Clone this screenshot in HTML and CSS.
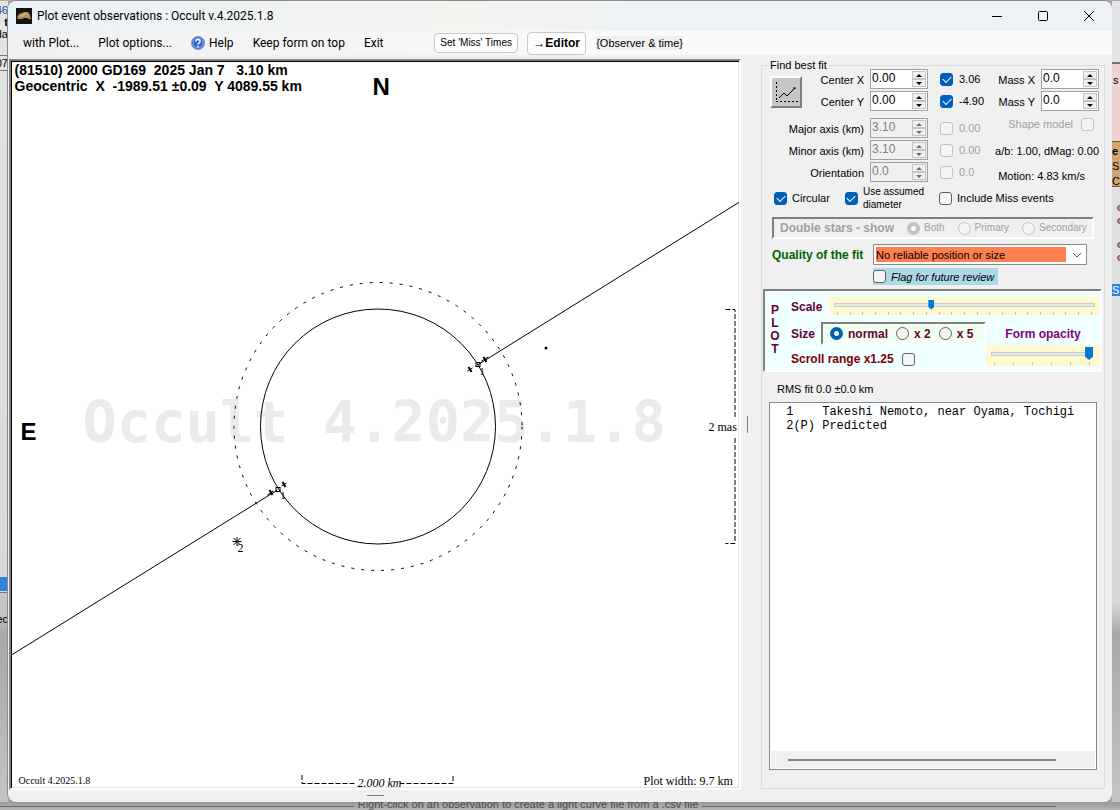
FILE: index.html
```html
<!DOCTYPE html>
<html lang="en">
  <head>
    <meta charset="utf-8" />
    <meta name="viewport" content="width=device-width" />
    <title>Plot event observations : Occult v.4.2025.1.8</title>
    <link rel="stylesheet" href="styles.css">
  </head>
  <body>
    <!-- visible edges of the form behind this window -->
    <div class="behind behind-left">
      <span class="frag frag-num">46</span>
      <span class="frag frag-bold">t</span>
      <span class="frag">da</span>
      <span class="frag frag-box">07</span>
      <span class="frag-fill"></span>
      <span class="frag-select"></span>
      <span class="frag-bar"></span>
      <span class="frag frag-low">ec</span>
    </div>

    <div class="window">
      <header class="titlebar">
        <svg class="app-icon" viewBox="0 0 16 16" aria-hidden="true">
          <rect width="16" height="16" fill="#17130f" />
          <path d="M1 9l2-3 3-1 2-1 4 0 2 3 1 4-2 0-2-1-3 0-2 1-4 0z" fill="#b08c64" />
          <path d="M3 8l3-2 4-1 3 2-4 0-3 2z" fill="#cdaa80" />
        </svg>
        <h1>Plot event observations : Occult v.4.2025.1.8</h1>
        <div class="caption-buttons">
          <button type="button" aria-label="Minimize">
            <svg viewBox="0 0 12 12"><path d="M1 6.5h10" /></svg>
          </button>
          <button type="button" aria-label="Maximize">
            <svg viewBox="0 0 12 12"><rect x="1.5" y="1.5" width="9" height="9" rx="1" /></svg>
          </button>
          <button type="button" aria-label="Close">
            <svg viewBox="0 0 12 12"><path d="M1 1l10 10M11 1L1 11" /></svg>
          </button>
        </div>
      </header>

      <nav class="menubar">
        <button type="button" class="menu">with Plot...</button>
        <button type="button" class="menu">Plot options...</button>
        <button type="button" class="menu menu-help">
          <svg viewBox="0 0 14 14" aria-hidden="true">
            <circle cx="7" cy="7" r="6.5" fill="#2a62cf" stroke="#7d9bd0" />
            <circle cx="7" cy="7" r="5" fill="none" stroke="#b9cdf5" stroke-width=".7" />
            <path d="M5 5.4c0-2.6 4.1-2.5 4.1 0 0 1.5-2 1.5-2 3" fill="none" stroke="#fff" stroke-width="1.5" />
            <circle cx="7" cy="10.5" r=".9" fill="#fff" />
          </svg>
          Help
        </button>
        <button type="button" class="menu">Keep form on top</button>
        <button type="button" class="menu">Exit</button>
        <button type="button" class="push push-miss">Set 'Miss' Times</button>
        <button type="button" class="push push-editor">→Editor</button>
        <span class="hint">{Observer &amp; time}</span>
      </nav>

      <main class="work">
        <section class="plot-column">
          <div class="plot">
            <svg viewBox="-1 0 727 727" role="img" aria-label="Event plot">
              <text class="watermark" x="70" y="381">Occult 4.2025.1.8</text>
              <text class="heading" x="2" y="14">(81510) 2000 GD169&#160; 2025 Jan 7&#160;&#160; 3.10 km</text>
              <text class="heading" x="2" y="30">Geocentric&#160; X&#160; -1989.51 ±0.09&#160; Y 4089.55 km</text>
              <text class="compass" x="360" y="34">N</text>
              <text class="compass" x="8" y="379">E</text>

              <g class="ink">
                <circle cx="365.5" cy="365.5" r="117.5" />
                <circle cx="365.5" cy="365.5" r="144" stroke-dasharray="3 7" />
                <path d="M727 141L465 304M265 429L-1 594" />
                <rect x="463.500" y="301.500" width="4" height="4" />
                <rect x="263.500" y="426.500" width="4" height="4" />
                <path d="M220 480.500h9M224.500 476v9M221 477l7 7M228 477l-7 7" />
              </g>
              <g class="ink-thick">
                <path d="M471 296l3 5M456 306l3 5M257 429l3 5M270 421l3 5" />
              </g>
              <path class="ink" d="M469 300l7-4M455 310l5-3M255 434l6-4M269 425l5-3" />
              <circle cx="533.500" cy="287" r="1.500" />
              <text class="small" x="467" y="314">1</text>
              <text class="small" x="268" y="438">1</text>
              <text class="label" x="225" y="491">2</text>

              <!-- angular scale -->
              <path class="ink scale-line" d="M713 248.500H722.500V357M722.500 377V482.500H713" />
              <text class="label" x="696" y="370">2 mas</text>

              <!-- distance scale -->
              <path class="ink scale-line" d="M289.500 714V722.500H344M387 722.500H440.500V713" />
              <text class="label italic" x="345" y="726">2.000 km</text>

              <text class="small" x="6" y="723">Occult 4.2025.1.8</text>
              <text class="label" x="631" y="724">Plot width: 9.7 km</text>
            </svg>
          </div>
          <div class="grip grip-bottom"></div>
        </section>

        <div class="splitter"><div class="grip grip-side"></div></div>

        <fieldset class="panel">
          <legend>Find best fit</legend>

          <div class="fit">
            <div class="fit-grid">
              <button type="button" class="fit-button" aria-label="Fit">
                <svg viewBox="0 0 28 28">
                  <path d="M4.500 4v20M4 23.500h22" stroke-dasharray="2 2" />
                  <path d="M7 20l5-5 3 3 8-8M21 10h3" />
                </svg>
              </button>
              <label class="name" for="cx">Center X</label>
              <span class="spin"><input id="cx" type="text" value="0.00"><span class="arrows"><button type="button" aria-label="Up"></button><button type="button" aria-label="Down"></button></span></span>
              <label class="tick"><input type="checkbox" checked>3.06</label>

              <label class="name" for="cy">Center Y</label>
              <span class="spin"><input id="cy" type="text" value="0.00"><span class="arrows"><button type="button" aria-label="Up"></button><button type="button" aria-label="Down"></button></span></span>
              <label class="tick"><input type="checkbox" checked>-4.90</label>

              <label class="name wide" for="major">Major axis (km)</label>
              <span class="spin"><input id="major" type="text" value="3.10" disabled><span class="arrows"><button type="button" aria-label="Up" disabled></button><button type="button" aria-label="Down" disabled></button></span></span>
              <label class="tick off"><input type="checkbox" disabled>0.00</label>

              <label class="name wide" for="minor">Minor axis (km)</label>
              <span class="spin"><input id="minor" type="text" value="3.10" disabled><span class="arrows"><button type="button" aria-label="Up" disabled></button><button type="button" aria-label="Down" disabled></button></span></span>
              <label class="tick off"><input type="checkbox" disabled>0.00</label>

              <label class="name wide" for="orient">Orientation</label>
              <span class="spin"><input id="orient" type="text" value="0.0" disabled><span class="arrows"><button type="button" aria-label="Up" disabled></button><button type="button" aria-label="Down" disabled></button></span></span>
              <label class="tick off"><input type="checkbox" disabled>0.0</label>
            </div>

            <div class="mass">
              <div class="mass-row">
                <label for="mx">Mass X</label>
                <span class="spin"><input id="mx" type="text" value="0.0"><span class="arrows"><button type="button" aria-label="Up"></button><button type="button" aria-label="Down"></button></span></span>
              </div>
              <div class="mass-row">
                <label for="my">Mass Y</label>
                <span class="spin"><input id="my" type="text" value="0.0"><span class="arrows"><button type="button" aria-label="Up"></button><button type="button" aria-label="Down"></button></span></span>
              </div>
              <label class="shape off">Shape model<input type="checkbox" disabled></label>
              <p class="ratio">a/b: 1.00, dMag: 0.00</p>
              <p class="motion">Motion: 4.83 km/s</p>
            </div>
          </div>

          <div class="options">
            <label><input type="checkbox" checked>Circular</label>
            <label class="two-line"><input type="checkbox" checked><span>Use assumed<br>diameter</span></label>
            <label><input type="checkbox">Include Miss events</label>
          </div>

          <div class="double">
            <b>Double stars - show</b>
            <label><input type="radio" name="double" checked disabled>Both</label>
            <label><input type="radio" name="double" disabled>Primary</label>
            <label><input type="radio" name="double" disabled>Secondary</label>
          </div>

          <div class="quality">
            <label for="quality">Quality of the fit</label>
            <span class="combo">
              <select id="quality"><option>No reliable position or size</option></select>
              <svg viewBox="0 0 10 6" aria-hidden="true"><path d="M1 1l4 4 4-4" /></svg>
            </span>
          </div>
          <label class="flag"><input type="checkbox">Flag for future review</label>

          <div class="plot-box">
            <div class="plot-word"><span>P</span><span>L</span><span>O</span><span>T</span></div>
            <div class="plot-controls">
              <div class="scale-row">
                <label for="scale">Scale</label>
                <div class="slider">
                  <input id="scale" type="range" min="0" max="20" step="0.1" value="7.4">
                  <div class="marks"><i></i><i></i><i></i><i></i><i></i><i></i><i></i><i></i><i></i><i></i><i></i><i></i><i></i><i></i><i></i><i></i><i></i><i></i><i></i><i></i><i></i></div>
                </div>
              </div>
              <div class="lower">
                <div class="size-side">
                  <div class="size-row">
                    <span>Size</span>
                    <div class="sizes">
                      <label><input type="radio" name="size" checked>normal</label>
                      <label><input type="radio" name="size">x 2</label>
                      <label><input type="radio" name="size">x 5</label>
                    </div>
                  </div>
                  <label class="scroll-range">Scroll range x1.25<input type="checkbox"></label>
                </div>
                <div class="opacity-side">
                  <label for="opacity">Form opacity</label>
                  <div class="slider">
                    <input id="opacity" class="tall" type="range" min="0" max="5" value="5">
                    <div class="marks"><i></i><i></i><i></i><i></i><i></i><i></i></div>
                  </div>
                </div>
              </div>
            </div>
          </div>

          <p class="rms">RMS fit 0.0 ±0.0 km</p>

          <div class="list">
            <ul>
              <li> 1    Takeshi Nemoto, near Oyama, Tochigi</li>
              <li> 2(P) Predicted</li>
            </ul>
            <div class="list-scroll"><div></div></div>
          </div>
        </fieldset>
      </main>
    </div>

    <div class="behind behind-right">
      <span class="frag frag-pink">s</span>
      <span class="frag frag-tan"><b>e</b><br>S<br>C</span>
      <span class="frag-dots"><i></i><i></i></span>
      <span class="frag-dots"><i></i><i></i></span>
      <span class="frag frag-blue">S</span>
    </div>
    <div class="behind behind-bottom"><span>Right-click on an observation to create a light curve file from a .csv file</span></div>
  </body>
</html>
```
FILE: styles.css
```css
* {
  box-sizing: border-box;
}
body {
  display: grid;
  grid-template-columns: 8px minmax(0, 1fr) 8px;
  grid-template-rows: minmax(0, 1fr) 8px;
  height: 100vh;
  min-height: 600px;
  margin: 0;
  padding-top: 1px;
  background: #a9a9ab;
  font: 12px/14px "Liberation Sans", Arial, sans-serif;
  color: #000;
}
p,
ul,
h1 {
  margin: 0;
  padding: 0;
}
button,
input,
select {
  margin: 0;
  padding: 0;
  font: inherit;
  color: inherit;
}

/* form behind */
.behind {
  display: flex;
  overflow: hidden;
}
.behind-left,
.behind-right {
  flex-direction: column;
  background: linear-gradient(#e4e4e4, #d8d8d8 75%, #a8a8a8 79%, #c4c4c4);
  font-size: 11px;
}
.behind-left {
  align-items: flex-end;
  padding-top: 3px;
}
.frag {
  flex: none;
  line-height: 12px;
}
.frag-num {
  color: #24488c;
}
.frag-bold {
  font-weight: bold;
}
.frag-box {
  margin-top: 15px;
  padding: 1px 0;
  border: 1px solid #777;
  border-right: 0;
}
.frag-fill {
  flex: 1;
}
.frag-select {
  width: 8px;
  height: 14px;
  background: #2d85de;
}
.frag-bar {
  width: 8px;
  height: 21px;
  margin-top: 1px;
  border-top: 1px solid #777;
  background: #c6c6c6;
}
.frag-low {
  margin: 0 0 177px;
}
.behind-right {
  padding-top: 61px;
}
.frag-pink {
  height: 79px;
  padding: 10px 0 0 1px;
  border-top: 2px solid #707070;
  background: #eed3d1;
}
.frag-tan {
  height: 46px;
  padding-top: 2px;
  border: solid #6a5a44;
  border-width: 1px 0;
  background: #d2a674;
  line-height: 15px;
}
.frag-dots {
  display: flex;
  flex-direction: column;
  gap: 7px;
  margin: 18px 0 0 5px;
}
.frag-dots i {
  width: 6px;
  height: 6px;
  border: 1px solid #604890;
  border-radius: 50%;
  background: #d89040;
}
.frag-blue {
  margin-top: 23px;
  background: #2d85de;
  color: #fff;
}
.behind-bottom {
  grid-column: 1 / -1;
  align-items: flex-start;
  justify-content: center;
  padding-right: 64px;
  background: linear-gradient(#9a9a9a, #b4b4b4);
  font-size: 11px;
  line-height: 4px;
  color: #4a4a50;
}
.behind-bottom::before,
.behind-bottom::after {
  content: "";
  flex: 1;
  height: 1px;
  margin: 4px 4px 0 0;
  background: #6a6e78;
}
.behind-bottom::after {
  margin: 4px 0 0 4px;
}

/* window */
.window {
  display: flex;
  flex-direction: column;
  min-width: 0;
  min-height: 0;
  border-radius: 8px;
  background: #f0f0f0;
  box-shadow: 0 0 0 1px #8c8c8c;
  overflow: hidden;
}
.titlebar {
  display: flex;
  flex: none;
  align-items: center;
  height: 30px;
  padding-left: 8px;
  background: linear-gradient(90deg, #eaf1f6, #f2f3f0 35%, #f3f3f0 42%, #edf2f7 65%, #edf2f7);
}
.app-icon {
  width: 16px;
  height: 16px;
  margin-right: 5px;
}
.titlebar h1 {
  flex: 1;
  font: 12px/16px Roboto, sans-serif;
}
.caption-buttons {
  display: flex;
}
.caption-buttons button {
  width: 46px;
  height: 30px;
  border: 0;
  background: none;
}
.caption-buttons svg {
  display: block;
  width: 12px;
  height: 12px;
  margin: auto;
  fill: none;
  stroke: #000;
}

.menubar {
  display: flex;
  flex: none;
  align-items: center;
  height: 24px;
  padding-left: 15px;
  background: linear-gradient(90deg, #f0f0f0, #fafafa 60%);
}
.menu {
  margin-right: 19px;
  border: 0;
  background: none;
  font: 12px/16px Roboto, sans-serif;
  white-space: nowrap;
}
.menu-help {
  display: flex;
  align-items: center;
  gap: 4px;
}
.menu-help svg {
  width: 14px;
  height: 14px;
}
.push {
  border: 1px solid #c8c8c8;
  border-radius: 4px;
  background: #fdfdfd;
  white-space: nowrap;
}
.push-miss {
  width: 84px;
  height: 20px;
  margin: 0 9px 0 auto;
  font-size: 10px;
}
.push-editor {
  width: 59px;
  height: 23px;
  margin-right: 10px;
  font-weight: bold;
}
.hint {
  margin-right: 429px;
  background: #f0f0f0;
  font-size: 11px;
  white-space: nowrap;
}

.work {
  display: flex;
  flex: 1;
  min-height: 0;
  padding: 4px 7px 0 1px;
}
.plot-column {
  display: flex;
  flex: 1;
  flex-direction: column;
  min-width: 0;
}
.plot {
  flex: 1;
  min-height: 0;
  border: 2px solid;
  border-color: #808080 #fff #fff #808080;
  background: #fff;
  box-shadow: inset 1px 1px #000, inset -1px -1px #e3e3e3;
}
.plot svg {
  display: block;
  width: 100%;
  height: 100%;
}
.plot text {
  white-space: pre;
}
.watermark {
  font: bold 57px "DejaVu Sans Mono", monospace;
  fill: #ebebeb;
}
.heading {
  font: bold 14px "Liberation Sans", sans-serif;
}
.compass {
  font: bold 24px "Liberation Sans", sans-serif;
}
.label {
  font: 12px "Liberation Serif", serif;
}
.small {
  font: 10px "Liberation Serif", serif;
}
.italic {
  font-style: italic;
}
.ink {
  fill: none;
  stroke: #000;
}
.ink-thick {
  fill: none;
  stroke: #000;
  stroke-width: 2;
}
.scale-line {
  stroke-dasharray: 5 2;
}
.grip {
  background: #808080;
}
.grip-bottom {
  flex: none;
  width: 17px;
  height: 1px;
  margin: 5px auto 6px;
}
.splitter {
  display: flex;
  flex: none;
  align-items: center;
  width: 20px;
  padding: 0 0 12px 6px;
}
.grip-side {
  width: 1px;
  height: 17px;
}

/* right panel */
.panel {
  display: flex;
  flex: none;
  flex-direction: column;
  width: 344px;
  min-width: 0;
  margin: 0 0 13px;
  padding: 0;
  border: 1px solid #dcdcdc;
}
legend {
  margin-left: 6px;
  padding: 0 2px;
  font-size: 11px;
  line-height: 12px;
}
input[type="checkbox"],
input[type="radio"] {
  display: grid;
  flex: none;
  place-items: center;
  width: 13px;
  height: 13px;
  border: 1px solid #626262;
  border-radius: 3px;
  background: #f5f5f5;
  appearance: none;
}
input[type="radio"] {
  border-radius: 50%;
}
input[type="checkbox"]:checked {
  border-color: #005fb8;
  background: #005fb8;
}
input[type="checkbox"]:checked::after {
  content: "";
  width: 7px;
  height: 4px;
  margin-top: -2px;
  border: solid #fff;
  border-width: 0 0 1px 1px;
  transform: rotate(-45deg);
}
input[type="radio"]:checked {
  border: 4px solid #005fb8;
  background: #fff;
}
input[type="checkbox"]:disabled,
input[type="radio"]:disabled {
  border-color: #c3c3c3;
}
.off {
  color: #a0a0a0;
}

.fit {
  display: flex;
  justify-content: space-between;
  padding: 0 5px 0 8px;
}
.fit-grid {
  display: grid;
  grid-template-columns: 34px 66px 58px 64px;
  grid-template-rows: 22px 27px 22px 22px 22px;
  align-items: start;
  margin-top: -2px;
}
.fit-button {
  grid-row: 1 / 3;
  width: 32px;
  height: 32px;
  margin-top: 7px;
  border: 2px solid;
  border-color: #fff #808080 #808080 #fff;
  background: #c6c6c6;
}
.fit-button svg {
  display: block;
  fill: none;
  stroke: #000;
}
.name {
  padding: 4px 6px 0 0;
  font-size: 11px;
  text-align: right;
  white-space: nowrap;
}
.wide {
  grid-column: 1 / 3;
}
.spin {
  display: flex;
  width: 58px;
  height: 20px;
  border: 1px solid #a0a0a4;
  background: #fff;
}
.spin input {
  width: 41px;
  height: 16px;
  padding-left: 1px;
  border: 0;
  outline: 0;
  background: none;
}
.spin:has(:disabled) {
  background: #f0f0f0;
  color: #808080;
}
.arrows {
  display: flex;
  flex-direction: column;
  width: 15px;
  padding: 1px 1px 1px 0;
}
.arrows button {
  display: grid;
  flex: 1;
  place-items: center;
  min-height: 0;
  border: 1px solid #c4c4c4;
  background: #f0f0f0;
}
.arrows button::before {
  content: "";
  border: solid transparent;
  border-width: 0 3px 3px;
  border-bottom-color: #000;
}
.arrows button:last-child::before {
  border-width: 3px 3px 0;
  border-top-color: #000;
}
.arrows button:disabled::before {
  opacity: .55;
}
.tick {
  display: flex;
  align-items: center;
  gap: 6px;
  height: 20px;
  padding-left: 12px;
  font-size: 11px;
}
.mass {
  display: flex;
  flex: none;
  flex-direction: column;
  align-items: flex-end;
  margin: -2px 0 0 -20px;
  font-size: 11px;
}
.mass-row {
  display: flex;
  gap: 6px;
  height: 22px;
}
.mass-row label {
  padding-top: 4px;
}
.mass-row input {
  font-size: 12px;
}
.shape {
  display: flex;
  align-items: center;
  gap: 8px;
  margin: 4px 5px 0 0;
}
.ratio {
  margin-top: 13px;
}
.motion {
  margin: 11px 14px 0 0;
}
.options {
  display: flex;
  align-items: center;
  gap: 15px;
  height: 28px;
  padding-left: 12px;
  font-size: 11px;
}
.options label {
  display: flex;
  align-items: center;
  gap: 5px;
}
.options .two-line {
  font-size: 10px;
  line-height: 13px;
}
.double {
  display: flex;
  align-items: center;
  gap: 13px;
  height: 22px;
  margin: 5px 10px 0;
  padding-left: 6px;
  border: 2px solid;
  border-color: #808080 #fff #fff #808080;
  font-size: 10px;
  color: #a0a0a0;
  white-space: nowrap;
}
.double b {
  font-size: 12px;
}
.double label {
  display: flex;
  align-items: center;
  gap: 4px;
}
.quality {
  display: flex;
  align-items: center;
  gap: 9px;
  margin-top: 5px;
  padding-left: 10px;
}
.quality label {
  width: 92px;
  font-weight: bold;
  color: #006400;
  white-space: nowrap;
}
.combo {
  display: flex;
  align-items: center;
  width: 214px;
  height: 21px;
  padding: 1px 3px 1px 2px;
  border: 1px solid #8a8a8a;
  border-radius: 1px;
  background: #fff;
}
.combo select {
  flex: 1;
  height: 15px;
  border: 0;
  outline: 0;
  background: #ff7f50;
  font-size: 11px;
  appearance: none;
}
.combo svg {
  width: 10px;
  height: 6px;
  margin: 0 1px 0 6px;
  fill: none;
  stroke: #555;
}
.flag {
  display: flex;
  align-items: center;
  align-self: flex-start;
  gap: 5px;
  height: 17px;
  margin: 3px 0 0 111px;
  padding-right: 4px;
  background: #add8e6;
  font-size: 11px;
  font-style: italic;
}

.plot-box {
  display: flex;
  height: 83px;
  margin: 4px 2px 0 1px;
  border: 2px solid;
  border-color: #808080 #fff #fff #808080;
  background: #f0ffff;
  font-weight: bold;
  color: #660033;
}
.plot-word {
  display: flex;
  flex-direction: column;
  width: 16px;
  margin-right: 10px;
  padding: 13px 0 0 4px;
  line-height: 13px;
  text-align: center;
}
.plot-controls {
  flex: 1;
  min-width: 0;
}
.scale-row {
  display: flex;
  gap: 6px;
  padding-top: 6px;
}
.scale-row label {
  width: 32px;
  padding-top: 3px;
}
.slider {
  flex: 1;
  padding: 2px 5px 0 5px;
  background: #fff8d0;
}
.slider input {
  display: block;
  width: 100%;
  height: 11px;
  background: linear-gradient(#e6e8e8, #e6e8e8) center / calc(100% - 2px) 2px no-repeat, linear-gradient(#c8ccd0, #c8ccd0) center / 100% 4px no-repeat;
  appearance: none;
}
.slider input::-webkit-slider-thumb {
  width: 6px;
  height: 10px;
  background: #0078d7;
  clip-path: polygon(0 0, 100% 0, 100% 75%, 50% 100%, 0 75%);
  appearance: none;
}
.slider .tall {
  height: 13px;
}
.slider .tall::-webkit-slider-thumb {
  width: 8px;
  height: 13px;
}
.marks {
  display: flex;
  justify-content: space-between;
  height: 5px;
  padding: 2px 3px 0;
}
.marks i {
  width: 1px;
  background: #c4c4b4;
}
.lower {
  display: flex;
}
.size-side {
  flex: 1;
}
.size-row {
  display: flex;
  align-items: center;
  gap: 5px;
  padding-top: 7px;
}
.size-row > span {
  width: 25px;
}
.sizes {
  display: flex;
  flex: 1;
  align-items: center;
  gap: 8px;
  height: 23px;
  padding-left: 7px;
  border: 2px solid;
  border-color: #808080 #fff #fff #808080;
  background: #f0fff0;
}
.sizes label {
  display: flex;
  align-items: center;
  gap: 5px;
}
.scroll-range {
  display: flex;
  align-items: center;
  gap: 8px;
  margin-top: 7px;
  color: #800000;
}
.opacity-side {
  width: 114px;
}
.opacity-side > label {
  display: block;
  padding: 12px 0 4px;
  text-align: center;
  color: #800080;
}
.opacity-side .slider {
  height: 21px;
  padding-right: 7px;
}

.rms {
  margin: 10px 0 0 15px;
  font-size: 11px;
}
.list {
  display: flex;
  flex: 1;
  flex-direction: column;
  min-height: 0;
  margin: 6px 7px 18px;
  padding: 1px;
  border: 1px solid #828790;
  background: #fff;
}
.list ul {
  flex: 1;
  padding: 1px 0 0 8px;
  font: 12px/14px "Liberation Mono", monospace;
  list-style: none;
}
.list li {
  white-space: pre;
}
.list-scroll {
  height: 17px;
  padding: 8px 39px 0 17px;
  background: #f0f0f0;
}
.list-scroll div {
  height: 2px;
  background: #858585;
}
```
